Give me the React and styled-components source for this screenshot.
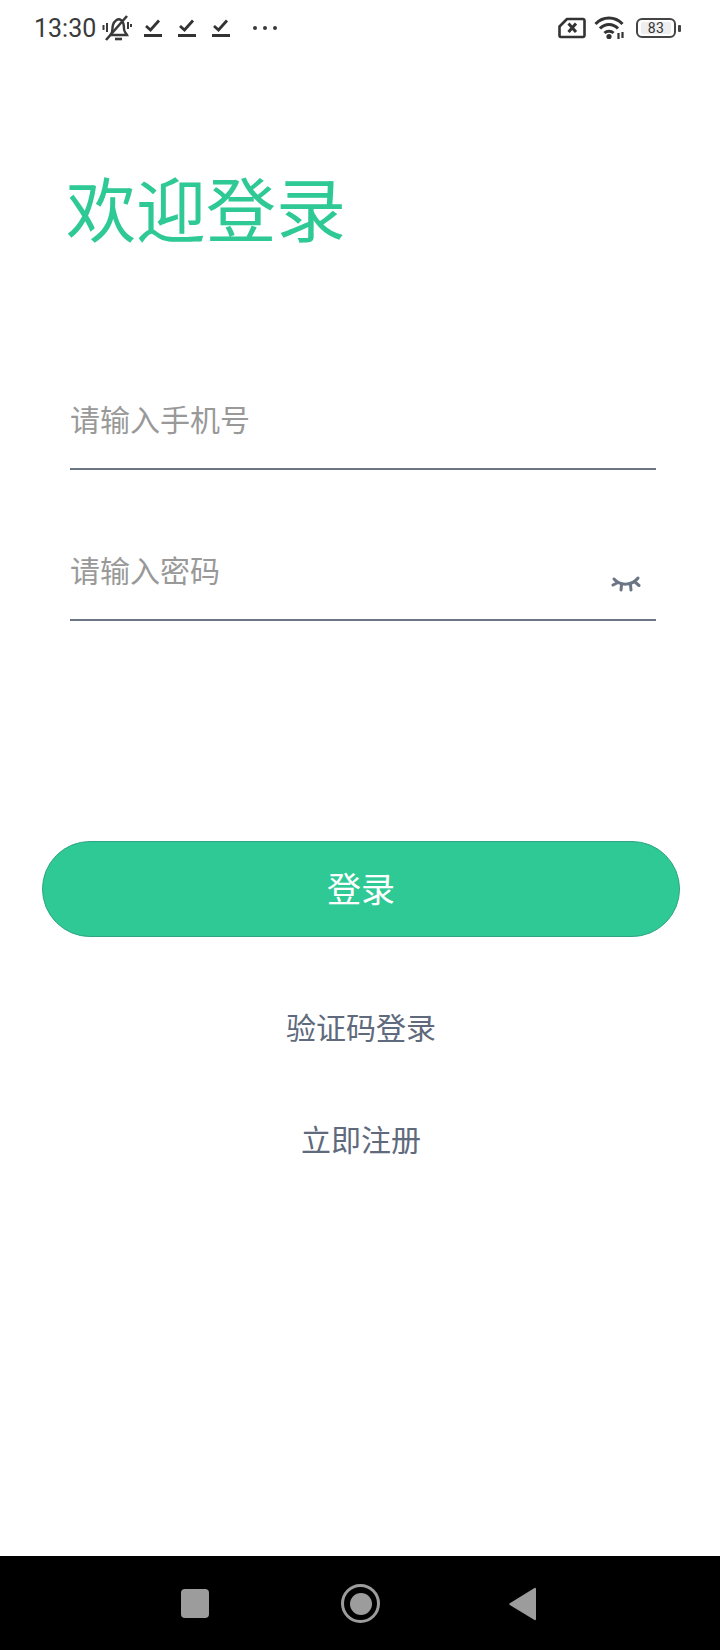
import React from 'react';
import styled, { createGlobalStyle } from 'styled-components';

const GlobalStyle = createGlobalStyle`
  html, body {
    margin: 0;
    padding: 0;
    background: #fff;
  }
  * {
    box-sizing: border-box;
  }
`;

const Screen = styled.div`
  width: 720px;
  height: 1650px;
  display: flex;
  flex-direction: column;
  background: #fff;
  font-family: "Noto Sans CJK SC", "Roboto", sans-serif;
`;

const StatusBar = styled.div`
  height: 56px;
  padding: 0 39px 0 34px;
  display: flex;
  align-items: center;
  justify-content: space-between;
  color: #333;
`;

const StatusGroup = styled.div`
  display: flex;
  align-items: center;
`;

const Time = styled.span`
  font-family: Roboto, sans-serif;
  font-size: 25px;
  color: #3a3a3a;
  margin-right: 6px;
`;

const Main = styled.main`
  flex: 1;
  padding: 0 40px 0 42px;
  display: flex;
  flex-direction: column;
`;

const Title = styled.h1`
  margin: 109px 0 0 24px;
  font-size: 70px;
  line-height: 84px;
  font-weight: 400;
  color: #2ec994;
`;

const Field = styled.div`
  height: ${(p) => p.$height}px;
  margin: ${(p) => p.$top}px 0 0 28px;
  width: 586px;
  display: flex;
  align-items: flex-start;
  justify-content: space-between;
  border-bottom: 2px solid #6b7585;
`;

const Placeholder = styled.span`
  font-size: 30px;
  line-height: 44px;
  margin-top: ${(p) => p.$top}px;
  color: #999;
`;

const EyeWrap = styled.span`
  display: flex;
  margin: 38px 15px 0 0;
`;

const LoginButton = styled.button`
  margin-top: 220px;
  width: 638px;
  height: 96px;
  border: 1px solid #2fa585;
  border-radius: 48px;
  background: #2ec994;
  color: #fff;
  font-family: inherit;
  font-size: 34px;
  padding: 0 0 3px;
`;

const TextLink = styled.div`
  width: 638px;
  margin-top: ${(p) => p.$top}px;
  text-align: center;
  font-size: 30px;
  line-height: 44px;
  color: #5f6a7c;
`;

const NavBar = styled.nav`
  height: 94px;
  padding: 1px 0 0 181px;
  background: #000;
  display: flex;
  align-items: center;
`;

const SquareKey = styled.span`
  width: 28px;
  height: 29px;
  border-radius: 4px;
  background: #9c9c9c;
`;

const HomeKey = styled.span`
  width: 39px;
  height: 39px;
  margin: 0 129px 0 132px;
  border-radius: 50%;
  border: 3px solid #9c9c9c;
  display: flex;
  align-items: center;
  justify-content: center;
  &::after {
    content: '';
    width: 22px;
    height: 22px;
    border-radius: 50%;
    background: #9c9c9c;
  }
`;

const Battery = styled.span`
  width: 40px;
  height: 20px;
  margin-left: 10px;
  padding: 2px 3px;
  border: 2px solid #444;
  border-radius: 6px;
  display: flex;
`;

const BatteryText = styled.span`
  flex: 1;
  background: #eee;
  border-radius: 2px;
  font-family: Roboto, sans-serif;
  font-size: 14px;
  line-height: 12px;
  letter-spacing: 0.5px;
  text-align: center;
  color: #333;
`;

const BatteryTip = styled.span`
  width: 3px;
  height: 7px;
  margin-left: 2px;
  border-radius: 1px;
  background: #444;
`;

const CheckIcon = () => (
  <svg width="20" height="20" viewBox="0 0 20 20" style={{ marginRight: 14 }}>
    <path d="M3 8 L7.5 12 L16 2.5" fill="none" stroke="#333" strokeWidth="2.8" />
    <rect x="1" y="16" width="18" height="3" fill="#333" />
  </svg>
);

const MuteBell = () => (
  <svg width="30" height="30" viewBox="0 0 30 30" fill="none" stroke="#3a3a3a" strokeWidth="2.4" style={{ marginRight: 11 }}>
    <path d="M9 21 C11 19 10 15 11 12 C12 8 16 5 19 7 C22 9 22 13 22 16 C22 19 24 20 25 22 L9 22 Z" />
    <path d="M4 27 L25 3" strokeWidth="2.6" />
    <path d="M13 26 h7" strokeWidth="2.6" />
    <path d="M5 10 v9 M1.5 12 v5 M26 9 v7 M29 11 v3" strokeWidth="2" />
  </svg>
);

const SimIcon = () => (
  <svg width="28" height="22" viewBox="0 0 28 22" fill="none" style={{ marginRight: 8 }}>
    <path d="M9 2 H25 a1.5 1.5 0 0 1 1.5 1.5 V18.5 a1.5 1.5 0 0 1 -1.5 1.5 H3 a1.5 1.5 0 0 1 -1.5 -1.5 V9.5 Z" stroke="#333" strokeWidth="2.6" strokeLinejoin="round" />
    <path d="M10.5 6.5 L18 15 M18 6.5 L10.5 15" stroke="#333" strokeWidth="3" />
  </svg>
);

const WifiIcon = () => (
  <svg width="32" height="24" viewBox="0 0 32 24" fill="none" stroke="#333" strokeWidth="3">
    <path d="M1.5 8 C9 0 21 0 28.5 8" />
    <path d="M6 12.5 C11 7 19 7 24 12.5" />
    <path d="M10.5 17 C13 14.5 17 14.5 19.5 17" />
    <circle cx="15" cy="20.5" r="2.6" fill="#333" stroke="none" />
    <path d="M24.5 17 v6 M28.5 16 v6" strokeWidth="2.2" />
  </svg>
);

const EyeClosed = () => (
  <svg width="30" height="18" viewBox="0 0 30 18" fill="none" stroke="#6b7585" strokeWidth="3" strokeLinecap="round">
    <path d="M3 4 C9 11 21 11 27 3" />
    <path d="M2 10 L7 7.5 M10.5 10 L10 15 M19.5 10 L20 15 M24 7 L28 10.5" />
  </svg>
);

const BackKey = () => (
  <svg width="28" height="34" viewBox="0 0 28 34">
    <path d="M27 2 V32 a1 1 0 0 1 -1.5 1 L0.8 18 a1 1 0 0 1 0 -1.8 L25.5 1 a1 1 0 0 1 1.5 1 Z" fill="#9c9c9c" />
  </svg>
);

const App = () => (
  <Screen>
    <GlobalStyle />
    <StatusBar>
      <StatusGroup>
        <Time>13:30</Time>
        <MuteBell />
        <CheckIcon />
        <CheckIcon />
        <CheckIcon />
        <svg width="26" height="6" viewBox="0 0 26 6" fill="#3a3a3a" style={{ marginLeft: 7 }}>
          <circle cx="3" cy="3" r="2" />
          <circle cx="13" cy="3" r="2" />
          <circle cx="23" cy="3" r="2" />
        </svg>
      </StatusGroup>
      <StatusGroup>
        <SimIcon />
        <WifiIcon />
        <Battery>
          <BatteryText>83</BatteryText>
        </Battery>
        <BatteryTip />
      </StatusGroup>
    </StatusBar>
    <Main>
      <Title>欢迎登录</Title>
      <Field $top={138} $height={83}>
        <Placeholder $top={9}>请输入手机号</Placeholder>
      </Field>
      <Field $top={67} $height={84}>
        <Placeholder $top={10}>请输入密码</Placeholder>
        <EyeWrap>
          <EyeClosed />
        </EyeWrap>
      </Field>
      <LoginButton>登录</LoginButton>
      <TextLink $top={67}>验证码登录</TextLink>
      <TextLink $top={68}>立即注册</TextLink>
    </Main>
    <NavBar>
      <SquareKey />
      <HomeKey />
      <BackKey />
    </NavBar>
  </Screen>
);

export default App;
